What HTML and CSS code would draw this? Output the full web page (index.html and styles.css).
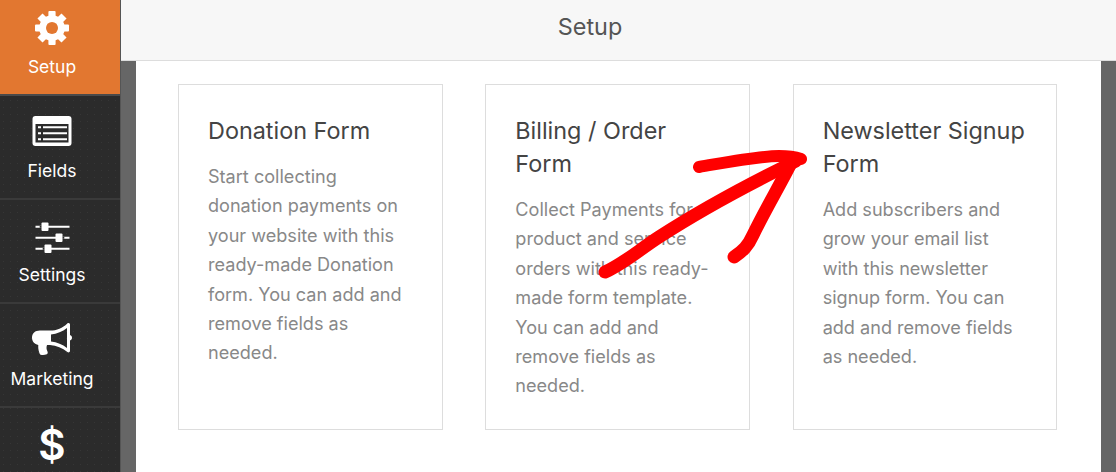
FILE: index.html
```html
<!DOCTYPE html>
<html lang="en">
<head>
    <meta charset="UTF-8">
    <meta name="viewport" content="width=device-width, initial-scale=1.0">
    <title>Setup</title>
    <link rel="stylesheet" href="styles.css">
</head>
<body>
    <div class="container">
        <nav class="sidebar">
            <a class="nav-item active">
                <svg class="nav-icon" width="40" height="40" viewBox="-20 -20 40 40" fill="#fff">
                    <path fill-rule="evenodd" d="M0-12.8A12.8 12.8 0 1 1 0 12.8A12.8 12.8 0 1 1 0-12.8ZM0-6A6 6 0 1 0 0 6A6 6 0 1 0 0-6Z"/>
                    <rect x="-3.6" y="-17" width="7.2" height="34" rx="1"/>
                    <rect x="-3.6" y="-17" width="7.2" height="34" rx="1" transform="rotate(90)"/>
                    <path d="M-3.6-17h7.2V-9h-7.2Z" transform="rotate(45)"/>
                    <path d="M-3.6-17h7.2V-9h-7.2Z" transform="rotate(135)"/>
                    <path d="M-3.6-17h7.2V-9h-7.2Z" transform="rotate(225)"/>
                    <path d="M-3.6-17h7.2V-9h-7.2Z" transform="rotate(315)"/>
                    <circle r="6" fill="#e27730"/>
                </svg>
                <span>Setup</span>
            </a>
            <a class="nav-item">
                <svg class="nav-icon" width="40" height="40" viewBox="0 0 40 40">
                    <rect x="0.500" y="4" width="39" height="30" rx="3" fill="#fff"/>
                    <rect x="3.500" y="12" width="33" height="18.500" fill="#2b2b2b"/>
                    <path fill="#fff" d="M6 14.300h3v2H6ZM11 14.300h24v2H11ZM6 20.300h3v2H6ZM11 20.300h24v2H11ZM6 26.300h3v2H6ZM11 26.300h24v2H11Z"/>
                </svg>
                <span>Fields</span>
            </a>
            <a class="nav-item">
                <svg class="nav-icon" width="40" height="40" viewBox="0 0 40 40" fill="#fff">
                    <path d="M3.500 9.700h34v2h-34ZM3.500 20.700h34v2h-34ZM3.500 31.700h34v2h-34Z"/>
                    <rect x="9.500" y="6.500" width="7" height="8.500" rx="1"/>
                    <rect x="23.500" y="17.500" width="7" height="8.500" rx="1"/>
                    <rect x="12.500" y="28.500" width="7" height="8.500" rx="1"/>
                    <path fill="#2b2b2b" d="M7.700 9.700h1.800v2H7.700ZM30.500 20.700h1.800v2h-1.800ZM10.700 31.700h1.800v2h-1.800Z"/>
                </svg>
                <span>Settings</span>
            </a>
            <a class="nav-item">
                <svg class="nav-icon" width="40" height="40" viewBox="0 0 40 40" fill="#fff">
                    <path fill-rule="evenodd" d="M36.500 3c1 0 1.500.8 1.500 1.800v10.200c1.200.5 2 1.300 2 2.800s-.8 2.300-2 2.800v10.200c0 1.300-1.500 2.200-2.600 1.300C30.500 28 24.500 25.500 18 25l-3 .1c-.8 2.300-.6 4.300.4 6.200.6 1.300.4 2.500-.6 3-2 .8-4.500.9-6 .4-1-.4-1.300-1.500-1.700-2.800-.8-2.500-1-4.500-.8-7C2.500 24.200 0 21.500 0 17.800 0 13.300 3 10.500 8 10.500h10c7 0 12.500-2.500 17.300-7.100.3-.3.700-.4 1.200-.4ZM35 8c-4.500 3.500-10 5.800-16 6.500v7c6 .7 11.500 3 16 6.500Z"/>
                </svg>
                <span>Marketing</span>
            </a>
            <a class="nav-item">
                <span class="nav-dollar">$</span>
            </a>
        </nav>
        <div class="content">
            <header class="topbar">Setup</header>
            <div class="gutter">
                <main class="panel">
                    <section class="card">
                        <h3>Donation Form</h3>
                        <p>Start collecting<br>donation payments on<br>your website with this<br>ready-made Donation<br>form. You can add and<br>remove fields as<br>needed.</p>
                    </section>
                    <section class="card">
                        <h3>Billing / Order<br>Form</h3>
                        <p>Collect Payments for<br>product and service<br>orders with this ready-<br>made form template.<br>You can add and<br>remove fields as<br>needed.</p>
                    </section>
                    <section class="card">
                        <h3>Newsletter Signup<br>Form</h3>
                        <p>Add subscribers and<br>grow your email list<br>with this newsletter<br>signup form. You can<br>add and remove fields<br>as needed.</p>
                    </section>
                </main>
            </div>
        </div>
    </div>

    <!-- hand drawn arrow over the cards -->
    <svg class="arrow" width="230" height="140" viewBox="0 0 230 140" fill="none" stroke="#f00" stroke-linecap="round" stroke-linejoin="round">
        <path stroke-width="13" d="M12 127C30 119 46 105 66 92C100 70 150 42 203 16"/>
        <path stroke-width="12" d="M106 22C130 18 165 11 186 11C194 11 202 12 208 14"/>
        <path stroke-width="13" d="M141 112C150 106 155 101 160 90C172 65 187 40 198 18"/>
    </svg>
</body>
</html>
```

FILE: styles.css
```css
* {
    margin: 0;
    padding: 0;
    box-sizing: border-box;
    font-family: Inter, "Liberation Sans", Arial, sans-serif;
}
html, body {
    height: 100%;
    overflow: hidden;
}
body {
    position: relative;
    background-color: #666;
}
.container {
    display: flex;
    height: 472px;
    overflow: hidden;
}
.sidebar {
    width: 121px;
    flex-shrink: 0;
    margin-top: -8px;
    background-color: #2b2b2b;
    background-image: radial-gradient(#363636 0.6px, transparent 0.8px);
    background-size: 7px 7px;
    border-right: 1px solid #555;
}
.nav-item {
    display: flex;
    flex-direction: column;
    align-items: center;
    height: 104px;
    padding: 16px 16px 0 0;
    color: #fff;
    font-size: 17.500px;
    border-bottom: 2px solid #3a3a3a;
}
.nav-item.active {
    background-color: #e27730;
    border-bottom-color: #4a4a4a;
}
.nav-icon {
    display: block;
    margin-bottom: 9px;
}
.nav-item span {
    line-height: 20px;
}
.nav-item .nav-dollar {
    font-size: 42px;
    font-weight: 600;
    line-height: 52px;
    margin-top: -5px;
}
.content {
    flex: 1;
    display: flex;
    flex-direction: column;
    min-width: 0;
}
.topbar {
    height: 61px;
    flex-shrink: 0;
    display: flex;
    align-items: center;
    justify-content: center;
    padding: 0 57px 8px 0;
    background-color: #f7f7f7;
    border-bottom: 1px solid #ddd;
    color: #555;
    font-size: 23.400px;
}
.gutter {
    flex: 1;
    padding: 0 15px;
    min-height: 0;
}
.panel {
    display: flex;
    gap: 42.670px;
    height: 100%;
    padding: 23px 43px 0 42px;
    background-color: #fff;
}
.card {
    width: 264.670px;
    height: 346px;
    padding: 29px 29px;
    border: 1px solid #ddd;
    background-color: #fff;
}
.card h3 {
    margin-bottom: 15px;
    color: #444;
    font-size: 23.400px;
    font-weight: normal;
    line-height: 33px;
    white-space: nowrap;
}
.card p {
    color: #888;
    font-size: 18.100px;
    line-height: 29.400px;
    white-space: nowrap;
}
.arrow {
    position: absolute;
    left: 593px;
    top: 145px;
}
```
